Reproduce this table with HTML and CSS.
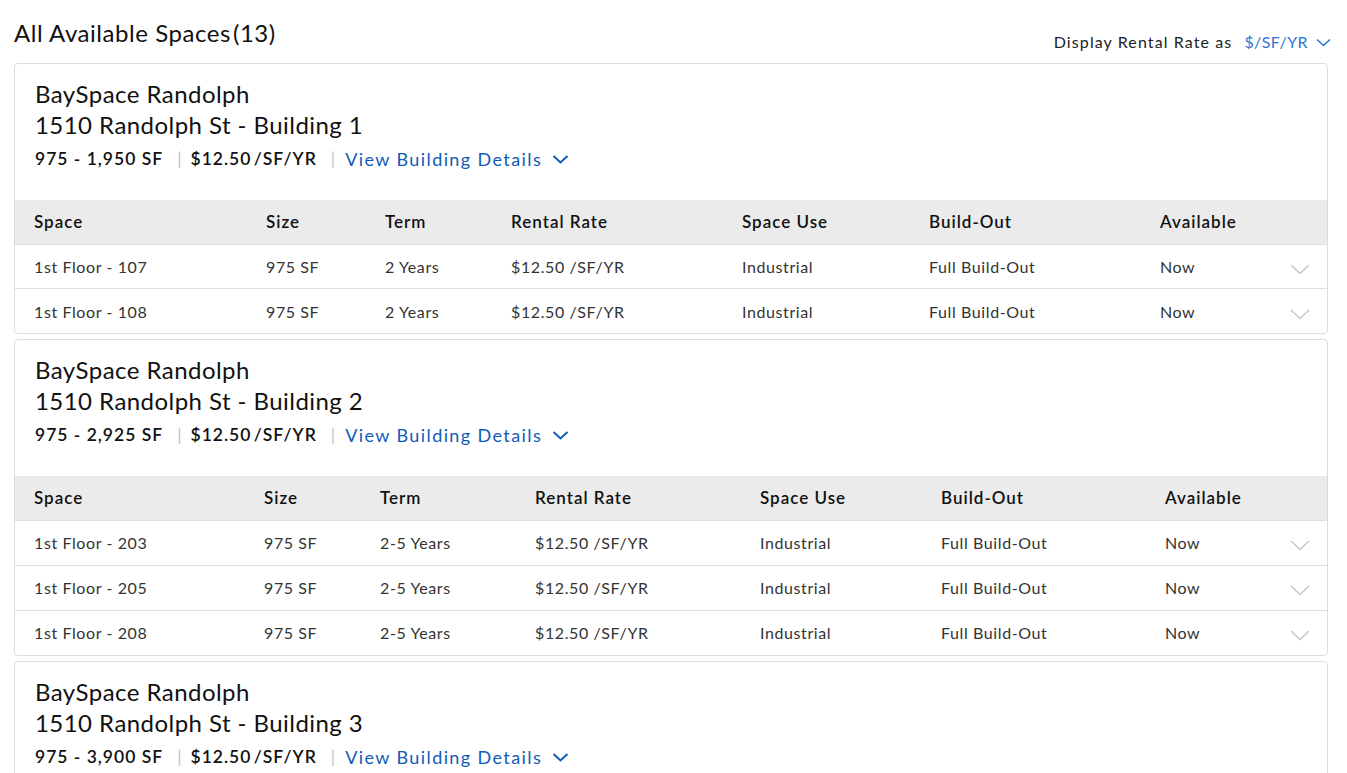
FILE: index.html
```html
<!DOCTYPE html>
<html lang="en">
<head>
<meta charset="utf-8">
<title>All Available Spaces</title>
<link rel="stylesheet" href="styles.css">
</head>
<body>
<div class="page">
  <div class="topbar">
    <h1 class="page-title">All Available Spaces<span class="count">(13)</span></h1>
    <div class="rate-toggle">
      <span class="rate-label">Display Rental Rate as</span>
      <span class="rate-value">$/SF/YR
        <svg class="chev-sm" width="15" height="9" viewBox="0 0 15 9"><path d="M1 1.5 L7.5 7.5 L14 1.5" fill="none" stroke="currentColor" stroke-width="1.6"/></svg>
      </span>
    </div>
  </div>

  <section class="card">
    <div class="card-head">
      <div class="bldg-name">BaySpace Randolph</div>
      <div class="bldg-name">1510 Randolph St - Building 1</div>
      <div class="stats">
        <span>975 - 1,950 SF</span><span class="sep">|</span><span class="rate">$12.50 /SF/YR</span><span class="sep">|</span>
        <span class="details">View Building Details
          <svg class="chev-link" width="17" height="10" viewBox="0 0 17 10"><path d="M1.5 2 L8.5 8.5 L15.5 2" fill="none" stroke="currentColor" stroke-width="2"/></svg>
        </span>
      </div>
    </div>
    <table class="spaces b1">
      <colgroup><col class="c1"><col class="c2"><col class="c3"><col class="c4"><col class="c5"><col class="c6"><col class="c7"><col class="c8"></colgroup>
      <thead><tr><th>Space</th><th>Size</th><th>Term</th><th>Rental Rate</th><th>Space Use</th><th>Build-Out</th><th>Available</th><th></th></tr></thead>
      <tbody>
        <tr><td>1st Floor - 107</td><td>975 SF</td><td>2 Years</td><td>$12.50 /SF/YR</td><td>Industrial</td><td>Full Build-Out</td><td>Now</td><td class="exp"><svg width="20" height="11" viewBox="0 0 20 11"><path d="M1 1 L10 9.5 L19 1" fill="none" stroke="#c8c8c8" stroke-width="1.6"/></svg></td></tr>
        <tr><td>1st Floor - 108</td><td>975 SF</td><td>2 Years</td><td>$12.50 /SF/YR</td><td>Industrial</td><td>Full Build-Out</td><td>Now</td><td class="exp"><svg width="20" height="11" viewBox="0 0 20 11"><path d="M1 1 L10 9.5 L19 1" fill="none" stroke="#c8c8c8" stroke-width="1.6"/></svg></td></tr>
      </tbody>
    </table>
  </section>

  <section class="card">
    <div class="card-head">
      <div class="bldg-name">BaySpace Randolph</div>
      <div class="bldg-name">1510 Randolph St - Building 2</div>
      <div class="stats">
        <span>975 - 2,925 SF</span><span class="sep">|</span><span class="rate">$12.50 /SF/YR</span><span class="sep">|</span>
        <span class="details">View Building Details
          <svg class="chev-link" width="17" height="10" viewBox="0 0 17 10"><path d="M1.5 2 L8.5 8.5 L15.5 2" fill="none" stroke="currentColor" stroke-width="2"/></svg>
        </span>
      </div>
    </div>
    <table class="spaces b2">
      <colgroup><col class="c1"><col class="c2"><col class="c3"><col class="c4"><col class="c5"><col class="c6"><col class="c7"><col class="c8"></colgroup>
      <thead><tr><th>Space</th><th>Size</th><th>Term</th><th>Rental Rate</th><th>Space Use</th><th>Build-Out</th><th>Available</th><th></th></tr></thead>
      <tbody>
        <tr><td>1st Floor - 203</td><td>975 SF</td><td>2-5 Years</td><td>$12.50 /SF/YR</td><td>Industrial</td><td>Full Build-Out</td><td>Now</td><td class="exp"><svg width="20" height="11" viewBox="0 0 20 11"><path d="M1 1 L10 9.5 L19 1" fill="none" stroke="#c8c8c8" stroke-width="1.6"/></svg></td></tr>
        <tr><td>1st Floor - 205</td><td>975 SF</td><td>2-5 Years</td><td>$12.50 /SF/YR</td><td>Industrial</td><td>Full Build-Out</td><td>Now</td><td class="exp"><svg width="20" height="11" viewBox="0 0 20 11"><path d="M1 1 L10 9.5 L19 1" fill="none" stroke="#c8c8c8" stroke-width="1.6"/></svg></td></tr>
        <tr><td>1st Floor - 208</td><td>975 SF</td><td>2-5 Years</td><td>$12.50 /SF/YR</td><td>Industrial</td><td>Full Build-Out</td><td>Now</td><td class="exp"><svg width="20" height="11" viewBox="0 0 20 11"><path d="M1 1 L10 9.5 L19 1" fill="none" stroke="#c8c8c8" stroke-width="1.6"/></svg></td></tr>
      </tbody>
    </table>
  </section>

  <section class="card">
    <div class="card-head">
      <div class="bldg-name">BaySpace Randolph</div>
      <div class="bldg-name">1510 Randolph St - Building 3</div>
      <div class="stats">
        <span>975 - 3,900 SF</span><span class="sep">|</span><span class="rate">$12.50 /SF/YR</span><span class="sep">|</span>
        <span class="details">View Building Details
          <svg class="chev-link" width="17" height="10" viewBox="0 0 17 10"><path d="M1.5 2 L8.5 8.5 L15.5 2" fill="none" stroke="currentColor" stroke-width="2"/></svg>
        </span>
      </div>
    </div>
    <table class="spaces b2">
      <colgroup><col class="c1"><col class="c2"><col class="c3"><col class="c4"><col class="c5"><col class="c6"><col class="c7"><col class="c8"></colgroup>
      <thead><tr><th>Space</th><th>Size</th><th>Term</th><th>Rental Rate</th><th>Space Use</th><th>Build-Out</th><th>Available</th><th></th></tr></thead>
      <tbody>
        <tr><td>1st Floor - 301</td><td>975 SF</td><td>2-5 Years</td><td>$12.50 /SF/YR</td><td>Industrial</td><td>Full Build-Out</td><td>Now</td><td class="exp"><svg width="20" height="11" viewBox="0 0 20 11"><path d="M1 1 L10 9.5 L19 1" fill="none" stroke="#c8c8c8" stroke-width="1.6"/></svg></td></tr>
      </tbody>
    </table>
  </section>
</div>
</body>
</html>
```

FILE: styles.css
```css
* { box-sizing: border-box; }
html, body { margin: 0; padding: 0; background: #fff; }
body {
  font-family: Lato, "Noto Sans", "Liberation Sans", sans-serif;
  color: #222;
}
.page { padding: 0 19px 0 14px; }

.topbar {
  display: flex;
  justify-content: space-between;
  align-items: flex-end;
  height: 63px;
  padding-bottom: 9px;
}
.page-title {
  margin: 0;
  font-size: 24px;
  font-weight: 400;
  letter-spacing: 0.55px;
  color: #111;
  line-height: 30px;
  padding-bottom: 6px;
}
.count { margin-left: 2px; }
.rate-toggle {
  display: flex;
  align-items: center;
  font-size: 16px;
  line-height: 22px;
  margin-right: -3px;
  padding-bottom: 1px;
}
.rate-label { color: #222; margin-right: 12px; letter-spacing: 1.1px; }
.rate-value { color: #2f73d0; display: flex; align-items: center; letter-spacing: 0.4px; }
.chev-sm { margin-left: 8px; }

.card {
  border: 1px solid #dcdcdc;
  border-radius: 4px;
  margin-bottom: 5px;
  overflow: hidden;
}
.card-head { padding: 14px 20px 26px; }
.bldg-name {
  font-size: 24px;
  line-height: 31px;
  letter-spacing: 0.45px;
  color: #111;
}
.stats {
  margin-top: 3px;
  display: flex;
  align-items: center;
  font-size: 17.5px;
  line-height: 30px;
  font-weight: 600;
  letter-spacing: 1px;
  color: #111;
  padding-top: 1px;
}
.rate { word-spacing: -3px; }
.sep { color: #c4c4c4; font-weight: 400; margin: 0 9px 0 14px; letter-spacing: 0; }
.details {
  color: #0f5cb8;
  font-weight: 400;
  font-size: 18px;
  letter-spacing: 1.4px;
  display: flex;
  align-items: center;
  margin-left: 1px;
}
.chev-link { margin-left: 10px; }

.spaces {
  width: 100%;
  border-collapse: collapse;
  table-layout: fixed;
  font-size: 16px;
}
.spaces th {
  background: #ebebeb;
  height: 44px;
  text-align: left;
  font-size: 17px;
  font-weight: 600;
  letter-spacing: 1px;
  color: #111;
  padding: 0;
}
.spaces td {
  height: 45px;
  border-top: 1px solid #dedede;
  padding: 0;
  color: #333;
  letter-spacing: 0.6px;
}
.b1 td { height: 44.5px; }
.spaces tr > :first-child { padding-left: 19px; }
.spaces .exp { text-align: center; padding-top: 4px; padding-left: 4px; }

.b1 .c1 { width: 251px; }
.b1 .c2 { width: 119px; }
.b1 .c3 { width: 126px; }
.b1 .c4 { width: 231px; }
.b1 .c5 { width: 187px; }
.b1 .c6 { width: 231px; }
.b1 .c7 { width: 108px; }
.b1 .c8 { width: 60px; }

.b2 .c1 { width: 249px; }
.b2 .c2 { width: 116px; }
.b2 .c3 { width: 155px; }
.b2 .c4 { width: 225px; }
.b2 .c5 { width: 181px; }
.b2 .c6 { width: 224px; }
.b2 .c7 { width: 103px; }
.b2 .c8 { width: 60px; }
```
